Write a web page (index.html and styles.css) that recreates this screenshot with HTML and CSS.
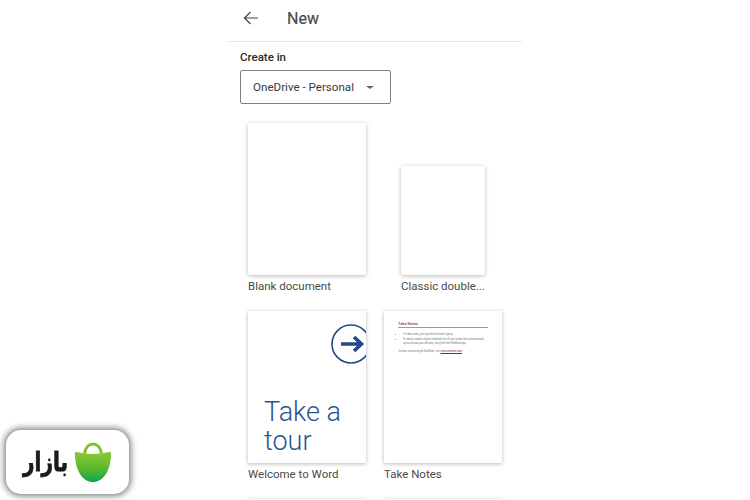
FILE: index.html
```html
<!DOCTYPE html>
<html lang="en">
<head>
  <meta charset="UTF-8">
  <meta name="viewport" content="width=device-width, initial-scale=1.0">
  <title>New document</title>
  <link rel="stylesheet" href="styles.css">
</head>
<body>
  <div class="screen">
    <header class="topbar">
      <svg class="back" width="16" height="14" viewBox="0 0 16 14">
        <path d="M15 7H1.500M7.500 1 1.500 7l6 6" fill="none" stroke="#444" stroke-width="1.200"/>
      </svg>
      <h1>New</h1>
    </header>

    <div class="create">
      <label>Create in</label>
      <div class="select">
        <span>OneDrive - Personal</span>
        <i class="caret"></i>
      </div>
    </div>

    <div class="templates">
      <div class="item">
        <div class="thumb"></div>
        <p>Blank document</p>
      </div>
      <div class="item item-small">
        <div class="thumb thumb-small"></div>
        <p>Classic double...</p>
      </div>
      <div class="item">
        <div class="thumb thumb-tour">
          <svg class="tour-arrow" width="40" height="40" viewBox="0 0 40 40">
            <circle cx="20" cy="20" r="19" fill="none" stroke="#1f4a8c" stroke-width="1.600"/>
            <path d="M10 20h20M23 13l7.500 7-7.500 7" fill="none" stroke="#1f4a8c" stroke-width="3.600"/>
          </svg>
          <div class="tour-text">Take a<br>tour</div>
        </div>
        <p>Welcome to Word</p>
      </div>
      <div class="item">
        <div class="thumb thumb-notes">
          <div class="notes-title">Take Notes</div>
          <ul>
            <li>To take notes, just tap here and start typing.</li>
            <li>Or, easily create a digital notebook for all your notes that automatically syncs across your devices, using the free OneNote app.</li>
          </ul>
          <div class="notes-foot">To learn more and get OneNote, visit <u>www.onenote.com</u>.</div>
        </div>
        <p>Take Notes</p>
      </div>
      <div class="thumb"></div>
      <div class="thumb"></div>
    </div>
  </div>

  <div class="badge">
    <span class="badge-name" lang="fa" dir="rtl">بازار</span>
    <svg width="38" height="41" viewBox="0 0 40 42" preserveAspectRatio="none">
      <defs>
        <linearGradient id="bag" x1="0" y1="0" x2="0" y2="1">
          <stop offset="0" stop-color="#8cc832"/>
          <stop offset="0.550" stop-color="#5cb82f"/>
          <stop offset="1" stop-color="#0ba650"/>
        </linearGradient>
      </defs>
      <path d="M11 12C12 5 16 2 20 2s8 3 9 10" fill="none" stroke="#7cc42e" stroke-width="3"/>
      <path d="M1 11.500C1 10.500 2 10 3 10.300C14 13 26 13 37 10.300C38 10 39 10.500 39 11.500C39 29 31 41 20 41S1 29 1 11.500Z" fill="url(#bag)"/>
    </svg>
  </div>
</body>
</html>
```

FILE: styles.css
```css
html, body {
  height: 100%;
}

body {
  margin: 0;
  background: white;
  font-family: Roboto, 'Liberation Sans', sans-serif;
  color: #333;
  overflow: hidden;
}

.screen {
  width: 295px;
  height: 500px;
  margin-left: 227px;
  overflow: hidden;
}

.topbar {
  display: flex;
  align-items: center;
  height: 42px;
  padding-left: 16px;
  padding-bottom: 5px;
  box-sizing: border-box;
  border-bottom: 1px solid #e8e8e8;
}

.back {
  margin-right: 28px;
}

h1 {
  margin: 0;
  font-size: 16px;
  font-weight: 400;
  -webkit-text-stroke: 0.2px #4a4a4a;
  color: #4a4a4a;
}

.create {
  padding: 8px 0 0 13px;
}

label {
  display: block;
  font-size: 11.500px;
  font-weight: 500;
  line-height: 14px;
  margin-bottom: 6px;
  color: #2a2a2a;
}

.select {
  display: flex;
  align-items: center;
  justify-content: space-between;
  width: 151px;
  height: 34px;
  padding: 0 13px 0 12px;
  box-sizing: border-box;
  border: 1px solid #808080;
  border-radius: 2px;
  font-size: 11.600px;
  white-space: nowrap;
  color: #3a3a3a;
}

.caret {
  border-left: 4px solid transparent;
  border-right: 4px solid transparent;
  border-top: 3px solid #666;
  margin-right: 3px;
}

.templates {
  display: grid;
  grid-template-columns: 118px 118px;
  column-gap: 18px;
  row-gap: 16px;
  margin: 19px 0 0 21px;
}

.item {
  display: flex;
  flex-direction: column;
  justify-content: flex-end;
}

.item p {
  margin: 3px 0 0;
  height: 17px;
  font-size: 11.500px;
  line-height: 17px;
  color: #4a4a4a;
  white-space: nowrap;
}

.item-small {
  padding-left: 17px;
}

.thumb {
  position: relative;
  height: 152px;
  background: white;
  border-radius: 2px;
  box-shadow: 0 1px 4px rgba(0, 0, 0, 0.28);
  overflow: hidden;
}

.thumb-small {
  width: 84px;
  height: 109px;
}

.thumb-tour {
  display: flex;
  align-items: flex-end;
  padding: 0 0 7px 16px;
  box-sizing: border-box;
  border-radius: 0;
}

.tour-arrow {
  position: absolute;
  top: 13px;
  left: 83px;
}

.tour-text {
  font-size: 27px;
  font-weight: 300;
  line-height: 29px;
  color: #2b5590;
}

.thumb-notes {
  padding: 11px 14px 0;
  box-sizing: border-box;
  border-radius: 0;
  font-size: 2.600px;
  line-height: 4.300px;
  color: #777;
}

.notes-title {
  padding-bottom: 1px;
  border-bottom: 1px solid #999;
  font-size: 4px;
  font-weight: 500;
  color: #8c3a52;
}

.thumb-notes ul {
  margin: 5px 0 4px;
  padding-left: 5px;
}

.notes-foot u {
  color: #8c2050;
  text-decoration-thickness: 0.5px;
}

.badge {
  position: fixed;
  left: 6px;
  top: 430px;
  display: flex;
  align-items: center;
  justify-content: center;
  gap: 6px;
  width: 123px;
  height: 64px;
  background: white;
  border-radius: 15px;
  box-shadow: 0 0 6px 2px rgba(0, 0, 0, 0.5);
}

.badge-name {
  font-family: 'DejaVu Sans', sans-serif;
  font-size: 20px;
  font-weight: bold;
  line-height: 28px;
  color: #1a1a1a;
  -webkit-text-stroke: 0.6px #1a1a1a;
  transform: scaleY(1.3);
}
```
